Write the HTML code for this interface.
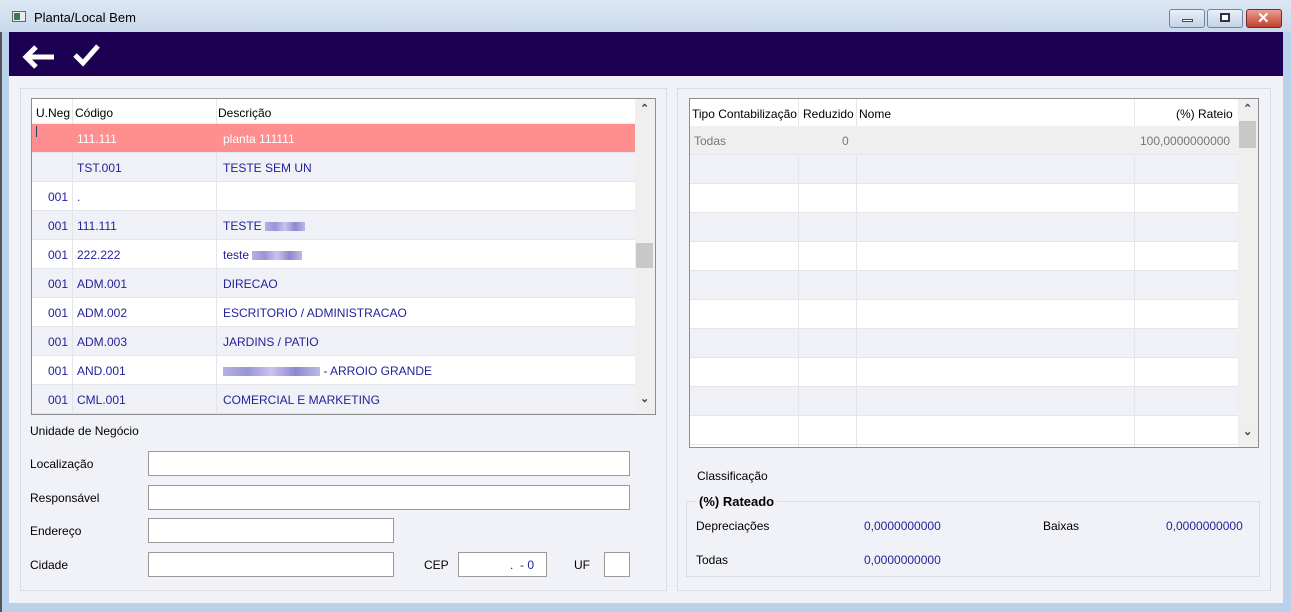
<!DOCTYPE html>
<html><head><meta charset="utf-8"><style>
*{box-sizing:border-box;margin:0;padding:0}
body{width:1291px;height:612px;overflow:hidden;position:relative;background:#b9d1ea;font-family:"Liberation Sans",sans-serif;font-size:12px;color:#000}
.a{position:absolute}
.t{position:absolute;white-space:nowrap}
.blue{color:#22229a}
.inp{position:absolute;background:#fff;border:1px solid #9a9a9a}
.blur{display:inline-block;height:9px;background:linear-gradient(90deg,#b6b2e2,#9a94d6,#c8c4ee,#8e88d0,#bdb9e8);vertical-align:middle}
</style></head><body>
<!-- outer frame -->
<div class="a" style="left:0;top:0;width:2px;height:612px;background:#555"></div>
<div class="a" style="left:0;top:0;width:1291px;height:32px;background:linear-gradient(#dce7f3,#c9d9ec)"></div>
<div class="a" style="left:12px;top:11px;width:14px;height:11px;background:#e8ecef;border:1px solid #666"></div>
<div class="a" style="left:14px;top:13px;width:6px;height:7px;background:#3a7a5a"></div>
<div class="t" style="left:34px;top:10px;font-size:13px">Planta/Local Bem</div>
<div class="a" style="left:1169px;top:9px;width:36px;height:19px;border:1px solid #6f84a0;border-radius:3px;background:linear-gradient(#e9f0f8,#c3d3e6)"></div>
<div class="a" style="left:1182px;top:19px;width:11px;height:3px;background:#fff;border:1px solid #445"></div>
<div class="a" style="left:1207px;top:9px;width:36px;height:19px;border:1px solid #6f84a0;border-radius:3px;background:linear-gradient(#e9f0f8,#c3d3e6)"></div>
<div class="a" style="left:1220px;top:13px;width:10px;height:9px;border:2px solid #334;background:#fff"></div>
<div class="a" style="left:1246px;top:9px;width:36px;height:19px;border:1px solid #7a2a20;border-radius:3px;background:linear-gradient(#e8a090,#c0402e)"></div>
<div class="t" style="left:1257px;top:9px;color:#fff;font-weight:bold;font-size:15px">✕</div>
<!-- toolbar -->
<div class="a" style="left:9px;top:32px;width:1274px;height:44px;background:#1c0052"></div>
<svg class="a" style="left:22px;top:44px" width="34" height="26" viewBox="0 0 34 26"><path d="M14 3 L4 13 L14 23 M4 13 H32" stroke="#fff" stroke-width="5" fill="none" stroke-linejoin="miter"/></svg>
<svg class="a" style="left:72px;top:42px" width="30" height="26" viewBox="0 0 30 26"><path d="M3 13 L11 21 L26 4" stroke="#fff" stroke-width="5" fill="none"/></svg>
<!-- content -->
<div class="a" style="left:9px;top:76px;width:1274px;height:527px;background:#f1f2f7"></div>
<div class="a" style="left:20px;top:88px;width:647px;height:503px;border:1px solid #dcdde2"></div>
<div class="a" style="left:677px;top:88px;width:594px;height:503px;border:1px solid #dcdde2"></div>

<!-- left grid -->
<div class="a" style="left:31px;top:98px;width:625px;height:317px;border:1px solid #8d8d8d;background:#fff;overflow:hidden">
 <div class="a" style="left:0;top:0;width:603px;height:25px;background:#fff;border-bottom:1px solid #eee"></div>
 <div class="a" style="left:40px;top:0;width:1px;height:25px;background:#e6e6e6"></div>
 <div class="a" style="left:184px;top:0;width:1px;height:25px;background:#e6e6e6"></div>
 <div class="t" style="left:4px;top:7px">U.Neg</div>
 <div class="t" style="left:43px;top:7px">Código</div>
 <div class="t" style="left:186px;top:7px">Descrição</div>
 <div id="lrows"></div>
 <div class="a" style="left:603px;top:0;width:20px;height:315px;background:#efefef"></div>
 <div class="a" style="left:604px;top:144px;width:17px;height:25px;background:#c8c8c8"></div>
 <div class="t" style="left:608px;top:3px;font-size:11px;color:#444;font-weight:bold">⌃</div>
 <div class="t" style="left:608px;top:293px;font-size:11px;color:#444;font-weight:bold">⌄</div>
</div>
<div class="t" style="left:30px;top:424px">Unidade de Negócio</div>
<div class="t" style="left:30px;top:457px">Localização</div>
<div class="t" style="left:30px;top:491px">Responsável</div>
<div class="t" style="left:30px;top:524px">Endereço</div>
<div class="t" style="left:30px;top:558px">Cidade</div>
<div class="t" style="left:424px;top:558px">CEP</div>
<div class="t" style="left:574px;top:558px">UF</div>
<div class="inp" style="left:148px;top:451px;width:482px;height:25px"></div>
<div class="inp" style="left:148px;top:485px;width:482px;height:25px"></div>
<div class="inp" style="left:148px;top:518px;width:246px;height:25px"></div>
<div class="inp" style="left:148px;top:552px;width:246px;height:25px"></div>
<div class="inp" style="left:458px;top:552px;width:89px;height:25px"></div>
<div class="t blue" style="left:510px;top:558px">.&nbsp; - 0</div>
<div class="inp" style="left:604px;top:552px;width:26px;height:25px"></div>

<!-- right grid -->
<div class="a" style="left:689px;top:98px;width:570px;height:350px;border:1px solid #8d8d8d;background:#fff;overflow:hidden">
 <div class="a" style="left:108px;top:0;width:1px;height:348px;background:#e6e6e6"></div>
 <div class="a" style="left:166px;top:0;width:1px;height:348px;background:#e6e6e6"></div>
 <div class="a" style="left:444px;top:0;width:1px;height:348px;background:#e6e6e6"></div>
 <div class="t" style="left:2px;top:8px">Tipo Contabilização</div>
 <div class="t" style="left:113px;top:8px">Reduzido</div>
 <div class="t" style="left:169px;top:8px">Nome</div>
 <div class="t" style="left:486px;top:8px">(%) Rateio</div>
 <div id="rrows"></div>
 <div class="a" style="left:548px;top:0;width:20px;height:348px;background:#efefef"></div>
 <div class="a" style="left:549px;top:22px;width:17px;height:27px;background:#c8c8c8"></div>
 <div class="t" style="left:553px;top:3px;font-size:11px;color:#444;font-weight:bold">⌃</div>
 <div class="t" style="left:553px;top:326px;font-size:11px;color:#444;font-weight:bold">⌄</div>
</div>
<div class="t" style="left:697px;top:469px">Classificação</div>
<div class="a" style="left:686px;top:501px;width:574px;height:76px;border:1px solid #dcdde2"></div>
<div class="t" style="left:696px;top:494px;font-weight:bold;font-size:13px;background:#f1f2f7;padding:0 3px">(%) Rateado</div>
<div class="t" style="left:696px;top:519px">Depreciações</div>
<div class="t blue" style="left:864px;top:519px">0,0000000000</div>
<div class="t" style="left:1043px;top:519px">Baixas</div>
<div class="t blue" style="left:1166px;top:519px">0,0000000000</div>
<div class="t" style="left:696px;top:553px">Todas</div>
<div class="t blue" style="left:864px;top:553px">0,0000000000</div>

<script>
var L=[["","111.111","planta 111111"],["","TST.001","TESTE SEM UN"],["001",".",""],["001","111.111","TESTE <span class=blur style=width:40px></span>"],["001","222.222","teste <span class=blur style=width:50px></span>"],["001","ADM.001","DIRECAO"],["001","ADM.002","ESCRITORIO / ADMINISTRACAO"],["001","ADM.003","JARDINS / PATIO"],["001","AND.001","<span class=blur style=width:97px></span> - ARROIO GRANDE"],["001","CML.001","COMERCIAL E MARKETING"]];
var h="";
L.forEach(function(r,i){var y=25+i*29;var bg=i==0?"#ff8e8e":(i%2?"#f0f1f7":"#fff");var c=i==0?"#fff":"#22229a";
h+='<div class="a" style="left:0;top:'+y+'px;width:603px;height:29px;background:'+bg+';border-bottom:1px solid #e4e5ea"></div>';
if(i>0)h+='<div class="a" style="left:40px;top:'+y+'px;width:1px;height:29px;background:#e4e5ea"></div><div class="a" style="left:184px;top:'+y+'px;width:1px;height:29px;background:#e4e5ea"></div>';
h+='<div class="t" style="left:4px;top:'+(y+8)+'px;width:32px;text-align:right;color:'+c+'">'+r[0]+'</div><div class="t" style="left:45px;top:'+(y+8)+'px;color:'+c+'">'+r[1]+'</div><div class="t" style="left:191px;top:'+(y+8)+'px;color:'+c+'">'+r[2]+'</div>';});
h+='<div class="a" style="left:4px;top:27px;width:1px;height:11px;background:#246"></div>';
document.getElementById("lrows").innerHTML=h;
h='<div class="a" style="left:0;top:27px;width:548px;height:29px;background:#efefef;border-bottom:1px solid #e4e5ea"></div><div class="t" style="left:4px;top:35px;color:#777">Todas</div><div class="t" style="left:152px;top:35px;color:#777">0</div><div class="t" style="left:450px;top:35px;color:#777">100,0000000000</div>';
for(var i=0;i<10;i++){var y=56+i*29;h+='<div class="a" style="left:0;top:'+y+'px;width:548px;height:29px;background:'+(i%2?"#fff":"#f0f1f7")+';border-bottom:1px solid #e4e5ea"></div>';}
h+='<div class="a" style="left:108px;top:56px;width:1px;height:300px;background:#e4e5ea"></div><div class="a" style="left:166px;top:56px;width:1px;height:300px;background:#e4e5ea"></div><div class="a" style="left:444px;top:56px;width:1px;height:300px;background:#e4e5ea"></div>';
document.getElementById("rrows").innerHTML=h;
</script>
</body></html>
